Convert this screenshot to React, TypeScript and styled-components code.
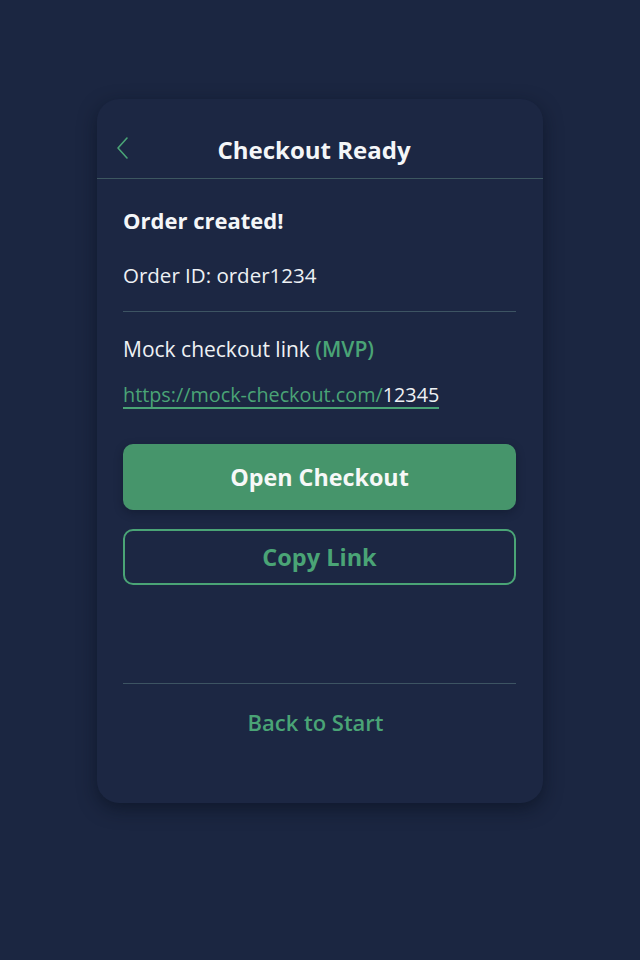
import styled, { createGlobalStyle } from "styled-components";

const GlobalStyle = createGlobalStyle`
  html, body {
    margin: 0;
    padding: 0;
    background: #1b2641;
  }
  body {
    font-family: "Open Sans", "Noto Sans", sans-serif;
  }
`;

const Page = styled.div`
  width: 640px;
  height: 960px;
  display: flex;
  justify-content: center;
  padding-top: 99px;
  box-sizing: border-box;
`;

const Card = styled.div`
  width: 446px;
  height: 704px;
  background: #1c2743;
  border-radius: 22px;
  box-shadow: 0 6px 18px rgba(8, 14, 28, 0.55);
  display: flex;
  flex-direction: column;
  box-sizing: border-box;
  overflow: hidden;
`;

const Header = styled.div`
  position: relative;
  height: 80px;
  display: flex;
  align-items: center;
  justify-content: center;
  border-bottom: 1px solid #3d5760;
  padding-top: 22px;
  box-sizing: border-box;
`;

const BackButton = styled.button`
  position: absolute;
  left: 18px;
  top: 37px;
  background: none;
  border: none;
  padding: 0;
  display: flex;
`;

const Title = styled.h1`
  margin: 0 0 0 -12px;
  font-size: 24px;
  font-weight: 700;
  color: #f4f6f8;
`;

const Body = styled.div`
  flex: 1;
  display: flex;
  flex-direction: column;
  padding: 0 27px 0 26px;
`;

const Heading = styled.div`
  margin-top: 26px;
  font-size: 22px;
  font-weight: 700;
  color: #f4f6f8;
`;

const Line = styled.div<{ $mt: number; $size: number }>`
  margin-top: ${(p) => p.$mt}px;
  font-size: ${(p) => p.$size}px;
  color: #eef1f4;
`;

const Accent = styled.span`
  color: #4aa476;
  font-weight: 600;
`;

const Divider = styled.div<{ $mt: number }>`
  margin-top: ${(p) => p.$mt}px;
  height: 1px;
  background: #3d5463;
`;

const LinkText = styled.a`
  display: inline-block;
  align-self: flex-start;
  margin-top: 19px;
  font-size: 19.8px;
  color: #4aa476;
  text-decoration: none;
  border-bottom: 2px solid #4aa476;
  line-height: 25px;
`;

const LinkTail = styled.span`
  color: #eef1f4;
`;

const PrimaryButton = styled.button`
  margin-top: 35px;
  height: 66px;
  border: none;
  border-radius: 10px;
  background: #46956b;
  color: #f6f8f7;
  font-family: inherit;
  font-size: 23.3px;
  font-weight: 700;
  box-shadow: 0 3px 8px rgba(8, 14, 28, 0.35);
`;

const OutlineButton = styled.button`
  margin-top: 19px;
  height: 56px;
  border: 2px solid #4aa476;
  border-radius: 10px;
  background: transparent;
  color: #4aa476;
  font-family: inherit;
  font-size: 23.5px;
  font-weight: 700;
`;

const FooterLink = styled.button`
  margin-top: 23px;
  align-self: center;
  margin-right: 8px;
  background: none;
  border: none;
  padding: 0;
  font-family: inherit;
  font-size: 22px;
  font-weight: 600;
  color: #4aa476;
`;

export default function App() {
  return (
    <>
      <GlobalStyle />
      <Page>
        <Card>
          <Header>
            <BackButton aria-label="Back">
              <svg width="14" height="24" viewBox="0 0 14 24" fill="none">
                <path d="M12 2 L3 12 L12 22" stroke="#4aa476" strokeWidth="1.6" strokeLinecap="round" strokeLinejoin="round" />
              </svg>
            </BackButton>
            <Title>Checkout Ready</Title>
          </Header>
          <Body>
            <Heading>Order created!</Heading>
            <Line $mt={26} $size={20.5}>Order ID: order1234</Line>
            <Divider $mt={22} />
            <Line $mt={23} $size={21}>
              Mock checkout link <Accent>(MVP)</Accent>
            </Line>
            <LinkText href="#">
              https://mock-checkout.com/<LinkTail>12345</LinkTail>
            </LinkText>
            <PrimaryButton>Open Checkout</PrimaryButton>
            <OutlineButton>Copy Link</OutlineButton>
            <Divider $mt={98} />
            <FooterLink>Back to Start</FooterLink>
          </Body>
        </Card>
      </Page>
    </>
  );
}
